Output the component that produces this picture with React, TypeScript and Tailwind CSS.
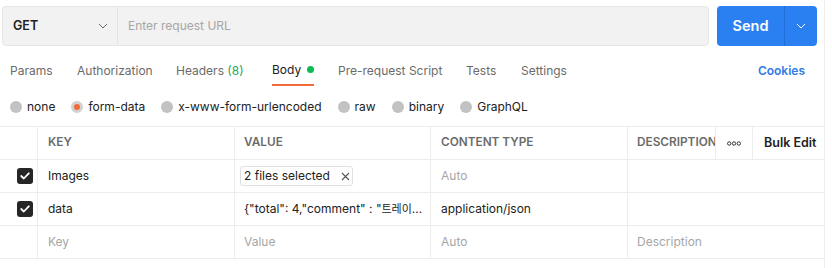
import React from "react";

const font = { fontFamily: 'Inter, "Noto Sans CJK KR", sans-serif' };

function Chevron({ color = "#6b6b6b" }: { color?: string }) {
  return (
    <svg width="10" height="6" viewBox="0 0 10 6" fill="none">
      <polyline points="1,1 5,5 9,1" stroke={color} strokeWidth="1" fill="none" />
    </svg>
  );
}

function Check() {
  return (
    <div className="w-[16px] h-[16px] rounded-[3px] bg-[#262626] flex items-center justify-center">
      <svg width="10" height="8" viewBox="0 0 10 8" fill="none">
        <polyline points="1.2,4 3.8,6.5 8.8,1.3" stroke="white" strokeWidth="1.8" fill="none" strokeLinecap="round" strokeLinejoin="round" />
      </svg>
    </div>
  );
}

function Radio({ label, selected }: { label: string; selected?: boolean }) {
  return (
    <div className="flex items-center gap-[5px]">
      {selected ? (
        <div className="w-[12px] h-[12px] rounded-full bg-[#f26b3a] border-[3px] border-[#d2d2d2]" />
      ) : (
        <div className="w-[12px] h-[12px] rounded-full bg-[#c2c2c2]" />
      )}
      <span className="text-[12px] text-[#212121]">{label}</span>
    </div>
  );
}

export default function App() {
  const cell = "border-r border-[#ededed] flex items-center overflow-hidden";
  const row = "grid grid-cols-[38px_197px_196px_197px_88px_37px_71px] h-[33px] border-b border-[#ededed]";
  const head = "text-[11.8px] font-semibold text-[#6b6b6b]";
  return (
    <div style={font} className="w-[825px] h-[268px] bg-white border-r border-[#ededed]">
      {/* URL bar */}
      <div className="flex pt-[6px] pl-[2px]">
        <div className="w-[707px] h-[40px] bg-[#f2f2f2] border border-[#e6e6e6] rounded-[4px] flex">
          <div className="w-[115px] border-r border-[#e3e3e3] flex items-center justify-between pl-[10px] pr-[9px]">
            <span className="text-[12.5px] font-semibold text-[#212121]">GET</span>
            <Chevron />
          </div>
          <div className="flex items-center pl-[10px] text-[12px] text-[#a6a6a6]">Enter request URL</div>
        </div>
        <div className="ml-[8px] w-[100px] h-[40px] bg-[#2a80f1] rounded-[4px] flex">
          <div className="w-[68px] border-r border-[#1f6ed8] flex items-center justify-center text-[14.5px] font-semibold text-white">
            Send
          </div>
          <div className="flex-1 flex items-center justify-center">
            <Chevron color="#ffffff" />
          </div>
        </div>
      </div>

      {/* Tabs */}
      <div className="flex items-stretch mt-[9px] h-[31px] pl-[10px] pr-[19px] text-[12px] text-[#6b6b6b]">
        <div className="w-[67px] flex items-center">Params</div>
        <div className="w-[99px] flex items-center">Authorization</div>
        <div className="w-[96px] flex items-center">
          Headers&nbsp;<span className="text-[#26a65b]">(8)</span>
        </div>
        <div className="w-[66px] flex">
          <div className="flex items-center gap-[6px] border-b-2 border-[#f26b3a] text-[#212121]">
            Body
            <span className="w-[7px] h-[7px] rounded-full bg-[#0cbb52]" />
          </div>
        </div>
        <div className="w-[128px] flex items-center">Pre-request Script</div>
        <div className="w-[55px] flex items-center">Tests</div>
        <div className="flex items-center">Settings</div>
        <div className="ml-auto flex items-center font-semibold text-[#2f7be6]">Cookies</div>
      </div>

      {/* Body types */}
      <div className="flex items-center gap-4 pl-[10px] mt-[11px] h-[19px]">
        <Radio label="none" />
        <Radio label="form-data" selected />
        <Radio label="x-www-form-urlencoded" />
        <Radio label="raw" />
        <Radio label="binary" />
        <Radio label="GraphQL" />
      </div>

      {/* Table */}
      <div className="mt-[10px] w-[824px] border-t border-[#ededed] text-[12px]">
        <div className={row}>
          <div className={cell} />
          <div className={`${cell} pl-[10px] ${head}`}>KEY</div>
          <div className={`${cell} pl-[9px] ${head}`}>VALUE</div>
          <div className={`${cell} pl-[10px] ${head}`}>CONTENT TYPE</div>
          <div className={`${cell} pl-[9px] ${head} whitespace-nowrap`}>DESCRIPTION</div>
          <div className={`${cell} justify-center`}>
            <svg width="14" height="5" viewBox="0 0 14 5" fill="none">
              <circle cx="2.2" cy="2.5" r="1.7" stroke="#212121" strokeWidth="0.9" />
              <circle cx="7" cy="2.5" r="1.7" stroke="#212121" strokeWidth="0.9" />
              <circle cx="11.8" cy="2.5" r="1.7" stroke="#212121" strokeWidth="0.9" />
            </svg>
          </div>
          <div className="flex items-center pl-[11px] text-[12.5px] font-semibold text-[#212121] whitespace-nowrap">Bulk Edit</div>
        </div>

        <div className={row}>
          <div className={`${cell} pl-[17px]`}>
            <Check />
          </div>
          <div className={`${cell} pl-[10px] text-[#212121]`}>Images</div>
          <div className={`${cell} pl-[5px]`}>
            <div className="h-[20px] w-[113px] border border-[#e0e0e0] rounded-[3px] flex items-center pl-[3px] gap-[11px] text-[#212121] whitespace-nowrap">
              2 files selected
              <svg width="9" height="9" viewBox="0 0 9 9" fill="none">
                <path d="M1 1L8 8M8 1L1 8" stroke="#555555" strokeWidth="1.1" />
              </svg>
            </div>
          </div>
          <div className={`${cell} pl-[10px] text-[#a6a6a6]`}>Auto</div>
          <div className="col-span-3" />
        </div>

        <div className={row}>
          <div className={`${cell} pl-[17px]`}>
            <Check />
          </div>
          <div className={`${cell} pl-[10px] text-[#212121]`}>data</div>
          <div className={`${cell} pl-[9px] pr-[5px] text-[#212121]`}>
            <span className="truncate">
              {'{"total": 4,"comment" : "'}
              <span className="text-[11px]">트레이닝 후기입니다</span>
              {'"}'}
            </span>
          </div>
          <div className={`${cell} pl-[10px] text-[#212121]`}>application/json</div>
          <div className="col-span-3" />
        </div>

        <div className={row}>
          <div className={cell} />
          <div className={`${cell} pl-[10px] text-[#a6a6a6]`}>Key</div>
          <div className={`${cell} pl-[9px] text-[#a6a6a6]`}>Value</div>
          <div className={`${cell} pl-[10px] text-[#a6a6a6]`}>Auto</div>
          <div className="col-span-3 flex items-center pl-[9px] text-[#a6a6a6]">Description</div>
        </div>
      </div>
    </div>
  );
}
